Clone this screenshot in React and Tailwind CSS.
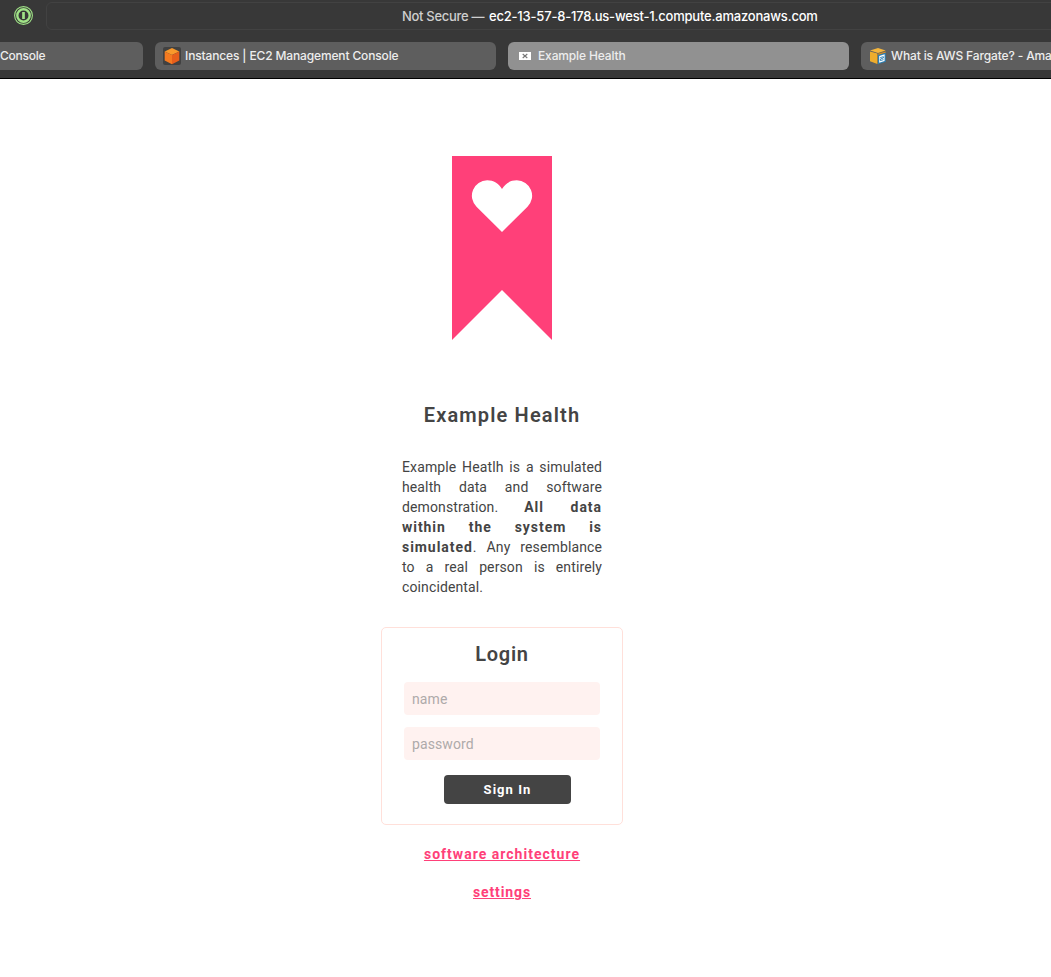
import React from "react";

const tabBase =
  "flex h-7 w-[341px] shrink-0 items-center overflow-hidden whitespace-nowrap rounded-[6px] text-[12px] font-medium leading-[28px] tracking-[-0.14px] text-[#ededed]";

function PasswordIcon() {
  return (
    <svg className="h-[19px] w-[19px]" viewBox="0 0 19 19" fill="none" stroke="#a0e387">
      <circle cx="9.5" cy="9.5" r="8.9" strokeWidth="1.1" />
      <circle cx="9.5" cy="9.5" r="6.2" strokeWidth="2.4" />
      <path d="M9.5 6v7" strokeWidth="2.7" />
    </svg>
  );
}

function Ec2Icon() {
  return (
    <svg className="h-[18px] w-[18px]" viewBox="0 0 18 18">
      <rect width="18" height="18" rx="2" fill="#414141" />
      <path d="M9 1 16.3 4.4 9 8 1.7 4.4Z" fill="#f9992b" />
      <path d="M1.7 4.4 9 8v9.3l-7.3-3.7Z" fill="#f57a20" />
      <path d="M16.3 4.4 9 8v9.3l7.3-3.7Z" fill="#e75e1b" />
    </svg>
  );
}

function AwsIcon() {
  return (
    <svg className="h-[18px] w-[18px]" viewBox="0 0 18 18">
      <path d="M1 3.5 9 1l7.7 2.5L9 6Z" fill="#f5b63c" />
      <path d="M1 4.4 8.4 6.6V17L1 14.2Z" fill="#eead2d" />
      <path d="M9.3 6.6l7.4-2.2v1.4L9.3 8.2Z" fill="#d28b25" />
      <path d="M9 8 16.8 5.8v9L9 17.2Z" fill="#2b7eb2" />
      <path d="m10.2 8.9 5.4-1.6v6.6l-5.4 1.9Z" fill="#fff" />
      <path d="m11.2 10.6 3.2-.9v1.3l-3 1v1.6l3.1-1" fill="none" stroke="#2b7eb2" strokeWidth=".9" />
    </svg>
  );
}

function MailIcon() {
  return (
    <svg className="h-2 w-3" viewBox="0 0 12 8">
      <rect width="12" height="8" fill="#fff" />
      <path d="M3.7 2 8.3 6M8.3 2 3.7 6" stroke="#777" strokeWidth="1.1" />
    </svg>
  );
}

function Browser() {
  return (
    <header className="h-[79px] overflow-hidden border-b border-black bg-[#383838] font-['Inter',sans-serif]">
      <div className="flex h-[30px] items-start">
        <div className="ml-[14px] mt-[6px] w-8 shrink-0">
          <PasswordIcon />
        </div>
        <div className="mt-[2px] h-7 w-[1130px] shrink-0 rounded-[6px] border border-[#424242] pl-[355px] text-[13px] leading-[27px]">
          <span className="inline-block w-[87px] whitespace-nowrap font-medium tracking-[-0.3px] text-[#cfcfcf]">Not Secure —</span>
          <span className="whitespace-nowrap font-medium tracking-[-0.2px] text-white">ec2-13-57-8-178.us-west-1.compute.amazonaws.com</span>
        </div>
      </div>
      <nav className="mt-3 flex gap-3">
        <div className="flex h-7 w-[143px] shrink-0 items-center rounded-r-[6px] bg-[#5e5e5e] text-[12px] font-medium tracking-[-0.25px] text-[#ededed]">Console</div>
        <div className={`${tabBase} bg-[#5e5e5e] pl-2`}>
          <Ec2Icon />
          <span className="ml-1">Instances | EC2 Management Console</span>
        </div>
        <div className={`${tabBase} bg-[#919191] pl-[11px]`}>
          <MailIcon />
          <span className="ml-[7px]">Example Health</span>
        </div>
        <div className={`${tabBase} bg-[#5e5e5e] pl-2`}>
          <AwsIcon />
          <span className="ml-1">What is AWS Fargate? - Amazon Web Services</span>
        </div>
      </nav>
    </header>
  );
}

function Logo() {
  return (
    <svg className="mt-[77px] h-[184px] w-[100px]" viewBox="0 0 100 184">
      <path d="M0 0h100v184L50 134 0 184Z" fill="#ff4079" />
      <path d="M50 76 24.5 50.7A15.4 15.4 0 0 1 35.2 24.3C41.6 24.3 46.7 27.4 50 33c3.3-5.6 8.4-8.7 14.8-8.7a15.4 15.4 0 0 1 10.7 26.4Z" fill="#fff" />
    </svg>
  );
}

const field =
  "block h-[33px] w-[196px] rounded-[4px] bg-[#fff2f0] px-2 text-[14px] tracking-[0.1px] outline-none placeholder:text-[#aeaaaa]";

export default function App() {
  return (
    <div className="h-[977px] overflow-hidden bg-white">
      <Browser />
      <main className="flex w-[1004px] flex-col items-center font-['Roboto',sans-serif] text-[#444]">
        <Logo />
        <h1 className="mt-[60px] whitespace-nowrap text-[20px] font-semibold leading-[30px] tracking-[1.15px]">Example Health</h1>
        <p className="mt-[27px] w-[200px] text-justify text-[14px] leading-5 tracking-[0.12px]">
          Example Heatlh is a simulated health data and software demonstration.{" "}
          <strong className="font-bold tracking-[0.95px]">All data within the system is simulated</strong>. Any resemblance to a real person is entirely coincidental.
        </p>
        <form className="mt-[30px] flex h-[198px] w-[242px] flex-col items-center rounded-[5px] border border-[#ffe0da]">
          <h2 className="mt-[11px] text-[20px] font-semibold leading-[30px] tracking-[0.7px]">Login</h2>
          <input className={`${field} mt-[13px]`} placeholder="name" />
          <input className={`${field} mt-3`} placeholder="password" />
          <button type="button" className="ml-[11px] mt-[15px] h-[29px] w-[127px] rounded-[4px] bg-[#444] text-[13px] font-bold tracking-[1.05px] text-white">Sign In</button>
        </form>
        <a href="#architecture" className="mt-[19px] text-[14px] font-bold leading-5 tracking-[1.02px] text-[#ff4079] underline">software architecture</a>
        <a href="#settings" className="mt-[18px] text-[14px] font-bold leading-5 tracking-[0.88px] text-[#ff4079] underline">settings</a>
      </main>
    </div>
  );
}
